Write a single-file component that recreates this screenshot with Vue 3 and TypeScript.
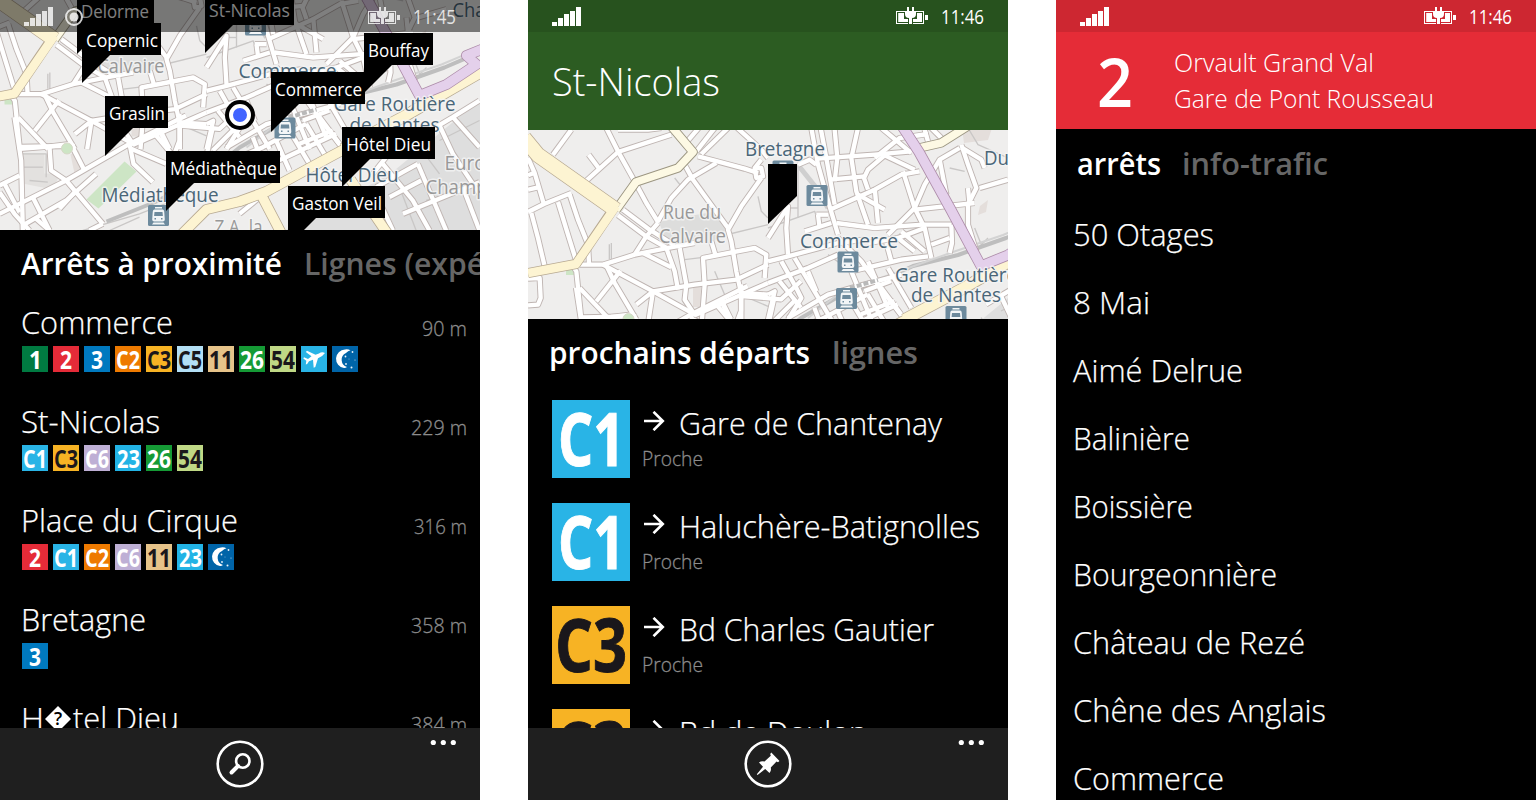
<script setup lang="ts">
import type { Directive } from 'vue'

/* Condenses a run of text horizontally to the given width in pixels. */
const vFit: Directive<HTMLElement, number> = {
  mounted(el, { value }) {
    const natural = el.getBoundingClientRect().width
    if (!natural) return
    el.style.transform = `scaleX(${value / natural})`
    el.style.marginRight = `${value - natural}px`
  },
}

interface Line { id: string; bg: string; fg?: string; w: number }
const L: Record<string, Line> = {
  '1': { id: '1', bg: '#007a41', w: 13 },
  '2': { id: '2', bg: '#e52b38', w: 12 },
  '3': { id: '3', bg: '#0079bf', w: 12 },
  C1: { id: 'C1', bg: '#29b4e6', w: 24 },
  C2: { id: 'C2', bg: '#ee7a00', w: 24 },
  C3: { id: 'C3', bg: '#f7b324', fg: '#1a171b', w: 24 },
  C5: { id: 'C5', bg: '#b3dff5', fg: '#1a171b', w: 24 },
  C6: { id: 'C6', bg: '#beafd5', w: 24 },
  '11': { id: '11', bg: '#e6c389', fg: '#1a171b', w: 24 },
  '23': { id: '23', bg: '#22b3e5', w: 23 },
  '26': { id: '26', bg: '#159a35', w: 24 },
  '54': { id: '54', bg: '#bfd885', fg: '#1a171b', w: 24 },
  plane: { id: 'plane', bg: '#29b4e6', w: 0 },
  moon: { id: 'moon', bg: '#0064a8', w: 0 },
}

interface Stop { name: string; w: number; dist: string; dw: number; lines: string[] }
const stops: Stop[] = [
  { name: 'Commerce', w: 152, dist: '90 m', dw: 45, lines: ['1', '2', '3', 'C2', 'C3', 'C5', '11', '26', '54', 'plane', 'moon'] },
  { name: 'St-Nicolas', w: 139, dist: '229 m', dw: 56, lines: ['C1', 'C3', 'C6', '23', '26', '54'] },
  { name: 'Place du Cirque', w: 217, dist: '316 m', dw: 53, lines: ['2', 'C1', 'C2', 'C6', '11', '23', 'moon'] },
  { name: 'Bretagne', w: 125, dist: '358 m', dw: 56, lines: ['3'] },
  { name: 'H\uFFFDtel Dieu', w: 159, dist: '384 m', dw: 56, lines: [] },
]

const pins = [
  { t: 'Delorme', w: 68, c: 'p-delorme' },
  { t: 'St-Nicolas', w: 81, c: 'p-nicolas' },
  { t: 'Copernic', w: 72, c: 'p-copernic' },
  { t: 'Graslin', w: 56, c: 'p-graslin' },
  { t: 'Bouffay', w: 61, c: 'p-bouffay' },
  { t: 'Commerce', w: 87, c: 'p-commerce' },
  { t: 'Médiathèque', w: 107, c: 'p-media' },
  { t: 'Hôtel Dieu', w: 85, c: 'p-hotel' },
  { t: 'Gaston Veil', w: 90, c: 'p-gaston' },
]

const departures = [
  { line: 'C1', lw: 67, name: 'Gare de Chantenay', w: 263 },
  { line: 'C1', lw: 67, name: 'Haluchère-Batignolles', w: 301 },
  { line: 'C3', lw: 72, name: 'Bd Charles Gautier', w: 255 },
  { line: 'C3', lw: 72, name: 'Bd de Doulon', w: 188 },
]

const arrets = [
  { name: '50 Otages', w: 141 },
  { name: '8 Mai', w: 77 },
  { name: 'Aimé Delrue', w: 170 },
  { name: 'Balinière', w: 117 },
  { name: 'Boissière', w: 120 },
  { name: 'Bourgeonnière', w: 204 },
  { name: 'Château de Rezé', w: 232 },
  { name: 'Chêne des Anglais', w: 253 },
  { name: 'Commerce', w: 151 },
]

/* Street network, one entry per district of the city map. */
const districts = [
  {
    t: 'translate(0 128) scale(.33333)',
    streets: [
      'M130 5L75 80', 'M235 0L270 70L320 160L355 225L392 285', 'M430 20L270 72L175 158', 'M182 80L212 120',
      'M0 90L20 135L48 230', 'M0 252L48 228L130 195', 'M0 142L18 135', 'M0 185L30 178', 'M10 255L30 330L50 415',
      'M90 222L120 320L145 400', 'M125 200L150 275L180 350L183 405', 'M270 262L350 322L420 362', 'M285 245L365 305L440 352',
      'M390 285L355 325L320 380', 'M390 280L430 210L480 155L565 105', 'M510 85L560 98L650 122L690 135', 'M470 110L495 155L600 300',
      'M505 70L560 0', 'M520 78L600 0', 'M465 55L512 0', 'M628 0L700 65L720 90', 'M700 150L640 235L600 305L610 340L625 430L640 500L640 575',
      'M155 410L225 410L320 380L420 360L500 345', 'M132 410L145 430L160 575', 'M225 410L375 490L505 562', 'M345 375L430 418',
      'M235 412L260 465L325 575', 'M278 428L205 520', 'M415 360L440 430L450 485', 'M455 360L475 470L470 515L500 560',
      'M375 490L500 470L625 455L720 410', 'M522 575L530 470L525 390L680 360L715 380L710 450', 'M500 562L640 500L720 465',
      'M155 480L245 575', 'M325 530L375 490L362 575', 'M0 532L30 530L38 510L35 450L0 452', 'M550 340L562 380', 'M580 520L605 575',
      'M160 568L325 565', 'M270 5L360 5L400 0', 'M640 495L720 500', 'M680 120L685 150L705 145L700 120L680 120L700 95',
    ],
    thin: ['M605 318L720 290', 'M470 395L525 388', 'M250 345V395', 'M690 205L700 250L720 270', 'M560 430L590 500', 'M650 505L720 535', 'M440 150L460 175'],
  },
  {
    t: 'translate(240 128) scale(.33333)',
    streets: [
      'M130 0L150 110L185 235L210 320', 'M158 0L175 90L200 230', 'M200 5L208 90L200 160', 'M150 92L320 80L430 70', 'M270 0L250 90L265 190L300 290',
      'M340 0L400 50L430 75', 'M320 90L395 30L480 18', 'M350 82L300 125L288 150L300 185', 'M345 80L440 125', 'M320 180L330 285',
      'M185 245L320 185L400 140L455 130', 'M405 130L440 240L470 300L490 390', 'M185 155L290 145', 'M470 5L480 40', 'M575 60L515 95L470 170L440 240L360 320',
      'M440 245L620 225', 'M270 200L350 245', 'M205 285L320 300L465 290L550 290', 'M515 95L535 200', 'M550 290L552 345L545 375',
      'M580 50L600 110L625 180L600 230L600 290L625 370', 'M580 58L640 95L650 120', 'M635 180L720 155', 'M600 180L605 230', 'M0 330L60 235L55 300L60 380',
      'M0 400L60 385L210 345L290 335', 'M80 390L190 575', 'M40 400L85 480L100 510L60 575', 'M0 465L120 420L210 380', 'M210 330L280 400L330 470L410 575',
      'M250 430L400 395L480 385', 'M300 345L390 330L470 300', 'M60 570L180 500L250 480L400 440', 'M110 310L190 285', 'M150 260L155 300', 'M300 400L360 540',
      'M360 420L430 540', 'M120 430L145 490', 'M250 430L310 575', 'M490 0L520 30', 'M90 110L125 95L145 110', 'M180 260L145 260', 'M0 500L20 490L0 575',
      'M390 330L440 370', 'M400 310L470 370', 'M490 350L545 330', 'M355 345L370 400',
    ],
    thin: ['M0 300L140 250L145 265', 'M90 120V270', 'M55 240L90 240', 'M545 120L590 130', 'M620 300L640 350L660 330', 'M180 380L250 430', 'M600 0L630 50L720 90'],
  },
  {
    t: 'translate(33 171) scale(.33333)',
    streets: [
      'M45 350L65 480L70 690', 'M62 445L150 438L215 430', 'M150 440L155 510L200 540L310 670', 'M215 432L255 510', 'M0 640L100 590L200 540L390 430L560 345',
      'M0 555L60 525', 'M0 575L45 640L90 690', 'M15 550L60 635', 'M100 590L150 690', 'M70 675L200 600L290 520', 'M390 430L402 490L460 545', 'M395 445L500 490',
      'M310 670L270 690', 'M230 570L180 625', 'M540 340L540 420L525 460', 'M470 405L520 465', 'M640 380L620 470', 'M480 385L510 445', 'M540 375L660 385L720 330',
      'M655 330L720 410', 'M700 390L640 450', 'M150 690L110 655',
    ],
    thin: ['M70 460H140V530', 'M70 500H130', 'M90 540L145 545', 'M145 220V265', 'M250 690L420 640L560 585', 'M330 690L420 650'],
  },
  {
    t: 'translate(273 171) scale(.33333)',
    streets: [
      'M640 350L720 440', 'M555 400L640 350L720 300', 'M430 490L520 600L570 690', 'M535 490L620 690', 'M450 590L545 540', 'M490 640L720 545',
      'M410 560L490 515L535 490', 'M600 375L640 460L720 580', 'M460 690L400 560', 'M670 560L720 690', 'M0 470L70 440L200 370', 'M0 530L140 470L290 400',
      'M40 410L90 540', 'M150 390L210 490', 'M200 370L260 470', 'M240 350L300 430', 'M110 420L150 510', 'M180 430L280 390', 'M190 360L270 330',
      'M80 575L0 640', 'M320 440L360 420', 'M440 470L400 520',
    ],
    thin: ['M540 440L600 520', 'M480 560L530 690', 'M560 600L700 560', 'M600 420L720 360'],
  },
]

const trams = [
  [289, 195.5], [320, 262], [318.5, 298.5], [428, 316.5], [255, 171], [192, 386],
]
const labels = [
  { t: 'Bretagne', x: 217, y: 156, w: 80 },
  { t: 'Commerce', x: 272, y: 248, w: 98 },
  { t: 'Gare Routière', x: 367, y: 281.5, w: 122 },
  { t: 'de Nantes', x: 383, y: 302, w: 90 },
  { t: 'Du', x: 456, y: 165, w: 25 },
  { t: 'Cha', x: 486, y: 187, w: 33 },
  { t: 'Hôtel Dieu', x: 339, y: 352.5, w: 93 },
  { t: 'Médiathèque', x: 135, y: 372, w: 117 },
]
const areas = [
  { t: 'Rue du', x: 135, y: 219, w: 58 },
  { t: 'Calvaire', x: 131, y: 243, w: 67 },
  { t: 'Euro', x: 478, y: 340, w: 41 },
  { t: 'Champ', x: 459, y: 364, w: 62 },
  { t: 'Z.A. la', x: 248, y: 404, w: 48 },
]
</script>

<template>
  <svg class="defs" width="0" height="0">
    <defs>
      <g id="city">
        <rect x="0" y="120" width="520" height="290" fill="#efeeed" />
        <path d="M318 401L423 345L520 265V401Z" fill="#dedede" />
        <path d="M131 222L150 218L185 212L200 228L185 242L140 246Z" fill="#dddddc" />
        <path d="M53 324h25v20h16l-8 16l-30-6Z" fill="#e3e1df" />
        <path d="M104 325l8 -4l6 16l-10 7ZM165 287h8v20h-8ZM434 128h30l-4 12l-24 3ZM452 206l8 -6l-2 12l-8 3Z" fill="#e4dedb" />
        <path d="M120 370L158 332L170 342L132 379Z" fill="#cde5c5" />
        <path d="M38 270h8v5h-8Z" fill="#cde5c5" />
        <g fill="none" stroke-linejoin="round">
          <g v-for="(d, i) in districts" :key="'t' + i" :transform="d.t" stroke="#c9c7c6" stroke-width="4">
            <path v-for="(p, j) in d.thin" :key="j" :d="p" />
          </g>
          <path d="M520 220L478 238L430 255L385 266L345 285L310 297L273 318L240 345L190 372L140 392" stroke="#bebebe" stroke-width="4" />
          <path d="M520 216L475 235L425 252L350 279L318 288L280 318" stroke="#d3d3d3" stroke-width="2" />
          <path d="M270 165L290 190L300 208" stroke="#cfcfcf" stroke-width="5" />
          <g v-for="(d, i) in districts" :key="'c' + i" :transform="d.t" stroke="#bfb5b2" stroke-width="18.500">
            <path v-for="(p, j) in d.streets" :key="j" :d="p" />
          </g>
          <g v-for="(d, i) in districts" :key="'s' + i" :transform="d.t" stroke="#fff" stroke-width="13">
            <path v-for="(p, j) in d.streets" :key="j" :d="p" />
          </g>
          <path d="M322 288L350 280" stroke="#b9b9b9" stroke-width="4" stroke-dasharray="5 2" />
          <g stroke="#9c9682" stroke-width="9.400">
            <path d="M143 126L165 152L150 168L108 182L88 210" />
            <path d="M440 126L413 143L391 148" />
          </g>
          <g stroke="#fdf9e4" stroke-width="7.600">
            <path d="M143 126L165 152L150 168L108 182L88 210" />
            <path d="M440 126L413 143L391 148" />
          </g>
          <g stroke="#b7a992">
            <path d="M-4 138L10 155L88 210" stroke-width="16" />
            <path d="M86 208L48 264L0 273" stroke-width="10" />
            <path d="M210 410L240 380L273 372L300 362L366 326L430 292L520 240M293 362L318 410M384 350L425 410" stroke-width="11" />
            <path d="M376 319L440 285L490 254" stroke-width="11" />
          </g>
          <g stroke="#fdf4d2">
            <path d="M-4 138L10 155L88 210" stroke-width="14.400" />
            <path d="M88 206L48 264L0 273" stroke-width="8.400" />
            <path d="M210 410L240 380L273 372L300 362L366 326L430 292L520 240M293 362L318 410M384 350L425 410" stroke-width="9.400" />
            <path d="M376 319L440 285L490 254" stroke-width="9.400" />
          </g>
          <path d="M374 126L391 152L423 210L453 266L480 255L510 235L500 226L520 218" stroke="#ad8ca9" stroke-width="11" />
          <path d="M374 126L391 152L423 210L453 266L480 255L510 235L500 226L520 218" stroke="#e4d0eb" stroke-width="9.400" />
          <circle cx="100.500" cy="319" r="5.500" fill="#cde5c5" stroke="#d8d8c8" />
        </g>
        <g v-for="([x, y], i) in trams" :key="'m' + i" :transform="`translate(${x - 10.5} ${y - 10.5})`">
          <rect width="21" height="21" rx="1.500" fill="#6d8a9d" />
          <path d="M7 2h7v1.500H7ZM6.500 4.500h8q1.500 0 1.700 2l.6 8q0 2-2 2H6.200q-2 0-2-2l.6-8q.2-2 1.700-2Z" fill="#f2f5f7" />
          <path d="M6.500 7h8l.4 4h-8.800ZM6.500 13h1.500v1.500H6.500ZM13 13h1.500v1.500H13Z" fill="#6d8a9d" />
          <path d="M5.500 17.500h10l1.500 2h-13Z" fill="#f2f5f7" />
        </g>
        <g class="maptext">
          <text v-for="a in areas" :key="a.t" class="area" :x="a.x" :y="a.y" :textLength="a.w" lengthAdjust="spacingAndGlyphs">{{ a.t }}</text>
          <text v-for="a in labels" :key="a.t" class="station" :x="a.x" :y="a.y" :textLength="a.w" lengthAdjust="spacingAndGlyphs">{{ a.t }}</text>
        </g>
      </g>
      <g id="signal" fill="#fff">
        <path d="M0 15h5v4H0ZM6 11h5v8H6ZM12 7h5v12h-5ZM18 4h5v15h-5ZM24 0h5v19h-5Z" />
      </g>
      <g id="battery" fill="#fff">
        <path d="M0 4h9v1H1v11h11v1H0ZM20 4h8v13H17v-1h10V5h-7Z" />
        <path d="M2.200 6H8v6h4v3H2.200ZM21 6h5v9h-9v-3h4ZM29 8h3v5h-3Z" />
        <path d="M11 0h2v4h3V0h2v4h2v3q0 4-4 4v6h-3v-6q-4 0-4-4V4h2Z" />
      </g>
    </defs>
  </svg>

  <main class="board">
    <section class="phone">
      <div class="map near">
        <svg width="480" height="230" viewBox="33.500 170.500 480 230"><use href="#city" /></svg>
        <div v-for="p in pins" :key="p.t" class="pin" :class="p.c"><span v-fit="p.w" class="fit">{{ p.t }}</span></div>
        <i class="me" />
        <header class="status over">
          <svg width="62" height="32"><use href="#signal" x="0" y="7" /><circle cx="50" cy="17" r="8" fill="none" stroke="#fff" stroke-width="2" /><circle cx="50" cy="17" r="4.500" fill="#fff" /></svg>
          <svg class="bat" width="33" height="32"><use href="#battery" y="7" /></svg>
          <span class="time"><span v-fit="43" class="fit">11:45</span></span>
        </header>
      </div>
      <nav class="tabs t1"><b v-fit="261" class="fit">Arrêts à proximité</b><b v-fit="180" class="fit off">Lignes (expé</b></nav>
      <div class="list">
        <article v-for="s in stops" :key="s.name" class="stop">
          <div class="head">
            <h3 v-if="s.lines.length"><span v-fit="s.w" class="fit">{{ s.name }}</span></h3>
            <h3 v-else class="broken"><span v-fit="23" class="fit">H</span><svg width="28" height="26" viewBox="0 0 28 26"><path d="M14 0L27 13L14 26L1 13Z" fill="#fff" /><text x="14" y="19">?</text></svg><span v-fit="106" class="fit">tel Dieu</span></h3>
            <span class="dist"><span v-fit="s.dw" class="fit">{{ s.dist }}</span></span>
          </div>
          <div class="badges">
            <span v-for="k in s.lines" :key="k" class="badge" :style="{ background: L[k].bg, color: L[k].fg }">
              <svg v-if="k === 'plane'" width="26" height="26"><path d="M24 7C22 5.800 20 6 18 7.500L14.500 8.800L6 4.800L4.800 6L10.500 10.300L7 13L3 11.300L2.300 12.500L5.300 14.800L4.800 18.500L6.200 18L8 15.300L12 13.800L12.700 21.800L14.300 21L17 12.300Q22 10 24 7Z" fill="#fff" /></svg>
              <svg v-else-if="k === 'moon'" width="26" height="26"><path d="M13 3.500A9.300 9.300 0 0 0 12 22Q13.500 22.200 15 21A7.500 7.500 0 0 1 14 7Q16 5 18.500 4.300Q16 3 13 3.500Z" fill="#fff" /><g fill="#e8f2fa"><circle cx="13.500" cy="10.500" r=".9" /><circle cx="20.500" cy="6" r=".9" /><circle cx="14" cy="18" r=".9" /><circle cx="19.500" cy="21.500" r="1" /><circle cx="23" cy="14" r=".5" /><circle cx="17" cy="13" r=".4" /></g></svg>
              <span v-else v-fit="L[k].w" class="fit">{{ k }}</span>
            </span>
          </div>
        </article>
      </div>
      <footer class="appbar">
        <svg width="480" height="72"><circle cx="240" cy="36" r="22.300" class="ring" /><circle cx="242.800" cy="33" r="6.700" class="ring" /><path d="M238 38L231.500 44.500" stroke="#fff" stroke-width="4" stroke-linecap="round" /><g fill="#fff"><circle cx="433.300" cy="14.500" r="2.600" /><circle cx="443.300" cy="14.500" r="2.600" /><circle cx="453.300" cy="14.500" r="2.600" /></g></svg>
      </footer>
    </section>

    <section class="phone">
      <div class="banner green">
        <header class="status">
          <svg width="62" height="32"><use href="#signal" x="0" y="7" /></svg>
          <svg class="bat" width="33" height="32"><use href="#battery" y="7" /></svg>
          <span class="time"><span v-fit="43" class="fit">11:46</span></span>
        </header>
        <h1><span v-fit="168" class="fit">St-Nicolas</span></h1>
      </div>
      <div class="map mid">
        <svg width="480" height="189" viewBox="0 130 480 189"><use href="#city" /><path d="M240 164H269V196L240 224Z" /></svg>
      </div>
      <nav class="tabs t2"><b v-fit="261" class="fit">prochains départs</b><b v-fit="86" class="fit off">lignes</b></nav>
      <div class="departs">
        <article v-for="d in departures" :key="d.name" class="depart">
          <span class="tile" :style="{ background: L[d.line].bg, color: L[d.line].fg }"><span v-fit="d.lw" class="fit">{{ d.line }}</span></span>
          <div class="info">
            <div class="dest">
              <svg width="22" height="20"><path d="M1 10H20M10.500 .8L19.800 10L10.500 19.200" fill="none" stroke="#fff" stroke-width="2.600" /></svg>
              <span v-fit="d.w" class="fit">{{ d.name }}</span>
            </div>
            <p><span v-fit="61" class="fit">Proche</span></p>
          </div>
        </article>
      </div>
      <footer class="appbar">
        <svg width="480" height="72"><circle cx="240" cy="36" r="22.300" class="ring" /><path d="M243.300 24.500L251.500 33L250 34.200L248.500 33.600L242.800 39.500Q243.500 43 241.500 45L237.200 41L229.500 47L228.800 46.300L235 38.800L231 34.600Q233 32.700 236.500 33.400L242.800 27.700L242.200 26Z" fill="#fff" /><g fill="#fff"><circle cx="433.300" cy="14.500" r="2.600" /><circle cx="443.300" cy="14.500" r="2.600" /><circle cx="453.300" cy="14.500" r="2.600" /></g></svg>
      </footer>
    </section>

    <section class="phone">
      <div class="banner red">
        <header class="status">
          <svg width="62" height="32"><use href="#signal" x="0" y="7" /></svg>
          <svg class="bat" width="33" height="32"><use href="#battery" y="7" /></svg>
          <span class="time"><span v-fit="43" class="fit">11:46</span></span>
        </header>
        <div class="route">
          <span class="num"><span v-fit="36" class="fit">2</span></span>
          <div class="ends">
            <div><span v-fit="200" class="fit">Orvault Grand Val</span></div>
            <div><span v-fit="260" class="fit">Gare de Pont Rousseau</span></div>
          </div>
        </div>
      </div>
      <nav class="tabs t3"><b v-fit="84" class="fit">arrêts</b><b v-fit="146" class="fit off">info-trafic</b></nav>
      <ul class="arrets">
        <li v-for="a in arrets" :key="a.name"><span v-fit="a.w" class="fit">{{ a.name }}</span></li>
      </ul>
    </section>
  </main>
</template>

<style>
body { background: #fff; overflow: hidden; }
</style>

<style scoped>
.defs { position: absolute; }
.board { display: flex; gap: 48px; width: 1536px; height: 800px; overflow: hidden; font-family: "Open Sans", "Noto Sans", sans-serif; color: #fff; }
.phone { width: 480px; height: 800px; flex: none; background: #000; overflow: hidden; display: flex; flex-direction: column; position: relative; }
.fit { display: inline-block; white-space: nowrap; transform-origin: 0 50%; flex: none; }
svg { display: block; flex: none; }
h1, h3, p, ul { margin: 0; padding: 0; font-weight: 300; }

.map { position: relative; overflow: hidden; flex: none; }
.near { height: 230px; }
.mid { height: 189px; }
.maptext text { font-family: "Open Sans", "Noto Sans", sans-serif; font-size: 19.5px; paint-order: stroke; stroke: rgba(245, 245, 245, .8); stroke-width: 3px; stroke-linejoin: round; }
.maptext .station { fill: #4a6678; }
.maptext .area { fill: #989898; }

.pin { position: absolute; height: 32px; box-sizing: border-box; padding-left: 4px; background: #000; font-size: 18px; line-height: 34px; white-space: nowrap; }
.pin::after { content: ""; position: absolute; left: 0; top: 32px; border-top: 28px solid #000; border-right: 28px solid transparent; }
.p-delorme { left: 77px; top: -6px; width: 77px; }
.p-nicolas { left: 205px; top: -7px; width: 89px; }
.p-copernic { left: 82px; top: 23px; width: 79px; }
.p-graslin { left: 105px; top: 96px; width: 63px; }
.p-bouffay { left: 364px; top: 33px; width: 69px; }
.p-commerce { left: 271px; top: 72px; width: 94px; }
.p-media { left: 166px; top: 151px; width: 114px; }
.p-hotel { left: 342px; top: 127px; width: 93px; }
.p-gaston { left: 288px; top: 186px; width: 97px; }
.me { position: absolute; left: 225px; top: 100px; width: 14px; height: 14px; border: 4px solid #fff; border-radius: 50%; background: #4164ff; box-shadow: 0 0 0 4px #000; margin: 4px; }

.status { display: flex; height: 32px; box-sizing: border-box; padding: 0 24px; background: rgba(0, 0, 0, .1); flex: none; }
.over { position: absolute; left: 0; top: 0; width: 480px; background: rgba(0, 0, 0, .5); }
.over > * { opacity: .8; }
.bat { margin-left: auto; }
.time { font-size: 19.5px; line-height: 34px; width: 43px; margin-left: 12px; }

.tabs { display: flex; gap: 23px; flex: none; font-size: 31.5px; line-height: 48px; height: 48px; overflow: hidden; }
.tabs b { font-weight: 600; }
.tabs .off { color: #666; }
.t1 { padding: 0 0 0 21px; margin-top: 9px; gap: 22px; }
.t2 { padding-left: 21px; margin-top: 9px; gap: 22px; }
.t3 { padding-left: 20.5px; margin-top: 10px; gap: 21px; }

.list { flex: 1; min-height: 0; overflow: hidden; padding: 13px 13px 0 21px; }
.stop { height: 99px; }
.head { display: flex; justify-content: space-between; height: 42px; }
.head h3 { font-size: 32px; line-height: 43px; -webkit-text-stroke: .25px #fff; }
.broken { display: flex; align-items: center; }
.broken svg { margin: 3px 1px 0 0; }
.broken text { font-family: "Open Sans", sans-serif; font-size: 18px; font-weight: 600; text-anchor: middle; fill: #000; stroke: none; }
.dist { font-size: 20px; line-height: 58px; color: #8c8c8c; font-weight: 300; -webkit-text-stroke: .3px #8c8c8c; }
.badges { display: flex; gap: 5px; margin: 4px 0 0 1px; }
.badge { width: 26px; height: 26px; display: flex; justify-content: center; overflow: hidden; font-size: 25px; font-weight: 700; line-height: 26px; }

.appbar { margin-top: auto; height: 72px; background: #1f1f1f; flex: none; }
.ring { fill: none; stroke: #fff; stroke-width: 2.6px; }

.banner { flex: none; display: flex; flex-direction: column; }
.green { height: 130px; background: #2c5c22; }
.red { height: 129px; background: #e52c37; }
h1 { font-size: 38.5px; line-height: 99px; padding-left: 24px; }

.departs { flex: 1; min-height: 0; overflow: hidden; padding: 24px 0 0 24px; }
.depart { display: flex; height: 78px; margin-bottom: 25px; }
.tile { width: 78px; height: 78px; display: flex; justify-content: center; overflow: hidden; font-size: 73px; font-weight: 700; line-height: 76px; -webkit-text-stroke: 1px; }
.info { padding-left: 12px; }
.dest { display: flex; height: 44px; font-size: 32px; line-height: 46px; font-weight: 300; -webkit-text-stroke: .25px #fff; }
.dest svg { margin: 10.500px 14px 0 1px; }
.info p { font-size: 20px; line-height: 30px; color: #8c8c8c; -webkit-text-stroke: .3px #8c8c8c; }

.route { display: flex; font-weight: 300; }
.num { width: 118px; box-sizing: border-box; padding-left: 41px; font-size: 67px; font-weight: 600; line-height: 98px; }
.ends { font-size: 26px; line-height: 36px; padding-top: 12px; }

.arrets { list-style: none; padding-left: 17px; margin-top: 13px; font-size: 32px; line-height: 68px; font-weight: 300; flex: 1; min-height: 0; overflow: hidden; -webkit-text-stroke: .25px #fff; }
.arrets li { height: 68px; }
</style>
